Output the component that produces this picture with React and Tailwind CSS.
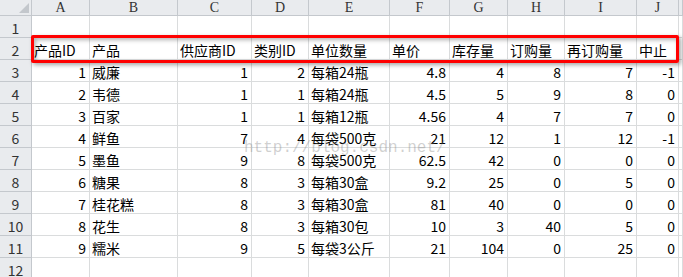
import React from 'react';

const cols = ['A', 'B', 'C', 'D', 'E', 'F', 'G', 'H', 'I', 'J', ''];

const header = ['产品ID', '产品', '供应商ID', '类别ID', '单位数量', '单价', '库存量', '订购量', '再订购量', '中止'];

const rows = [
  [1, '威廉', 1, 2, '每箱24瓶', '4.8', 4, 8, 7, -1],
  [2, '韦德', 1, 1, '每箱24瓶', '4.5', 5, 9, 8, 0],
  [3, '百家', 1, 1, '每箱12瓶', '4.56', 4, 7, 7, 0],
  [4, '鲜鱼', 7, 4, '每袋500克', '21', 12, 1, 12, -1],
  [5, '墨鱼', 9, 8, '每袋500克', '62.5', 42, 0, 0, 0],
  [6, '糖果', 8, 3, '每箱30盒', '9.2', 25, 0, 5, 0],
  [7, '桂花糕', 8, 3, '每箱30盒', '81', 40, 0, 0, 0],
  [8, '花生', 8, 3, '每箱30包', '10', 3, 40, 5, 0],
  [9, '糯米', 9, 5, '每袋3公斤', '21', 104, 0, 25, 0],
];

// text columns are left aligned, numbers right aligned
const textCols = [1, 4];

function RowHead({ n }) {
  return (
    <div className="h-[22px] bg-[#e9ebee] border-r border-b border-[#c4c8cd] flex items-end justify-center text-[#333] leading-[18px]">
      {n}
    </div>
  );
}

function Cell({ children, right }) {
  return (
    <div
      className={
        'h-[22px] border-r border-b border-[#dadcdd] flex items-end leading-[18px] whitespace-nowrap overflow-hidden text-black ' +
        (right ? 'justify-end pr-[3px]' : 'justify-start pl-[2px]')
      }
    >
      {children}
    </div>
  );
}

export default function App() {
  const sheet = [
    new Array(11).fill(''),
    [...header, ''],
    ...rows.map(r => [...r, '']),
    new Array(11).fill(''),
  ];

  return (
    <div
      className="relative w-[683px] h-[277px] overflow-hidden bg-white text-[14px]"
      style={{ fontFamily: '"Noto Sans CJK SC", "Noto Sans", sans-serif' }}
    >
      <div className="grid grid-cols-[32px_58px_88px_74px_57px_81px_60px_58px_57px_72px_42px_1fr]">
        {/* column letters */}
        <div className="h-[16px] bg-[#e9ebee] border-r border-b border-[#c4c8cd] flex items-end justify-end p-[2px]">
          <svg width="10" height="10" viewBox="0 0 10 10">
            <polygon points="10,0 10,10 0,10" fill="#c3c7cc" />
          </svg>
        </div>
        {cols.map((c, i) => (
          <div
            key={i}
            className="h-[16px] bg-[#e9ebee] border-r border-b border-[#c4c8cd] flex items-center justify-center text-[#333] text-[14px] leading-none"
            style={{ fontFamily: '"Liberation Serif", serif' }}
          >
            {c}
          </div>
        ))}

        {/* rows */}
        {sheet.map((r, ri) => (
          <React.Fragment key={ri}>
            <RowHead n={ri + 1} />
            {r.map((v, ci) => (
              <Cell key={ci} right={ri >= 2 && ri <= 10 && !textCols.includes(ci)}>
                {v}
              </Cell>
            ))}
          </React.Fragment>
        ))}
      </div>

      {/* highlight around the header row */}
      <div className="absolute left-[31px] top-[35px] w-[648px] h-[28px] border-[3px] border-[#ff0000] rounded-[2px] shadow-[2px_2px_4px_rgba(0,0,0,0.35),inset_2px_2px_4px_rgba(0,0,0,0.3)] pointer-events-none" />

      {/* watermark */}
      <div
        className="absolute left-[244px] top-[138px] text-[16px] leading-[20px] text-[rgba(120,120,120,0.35)] pointer-events-none"
        style={{ fontFamily: '"Liberation Mono", monospace' }}
      >
        http://blog.csdn.net/
      </div>
    </div>
  );
}
